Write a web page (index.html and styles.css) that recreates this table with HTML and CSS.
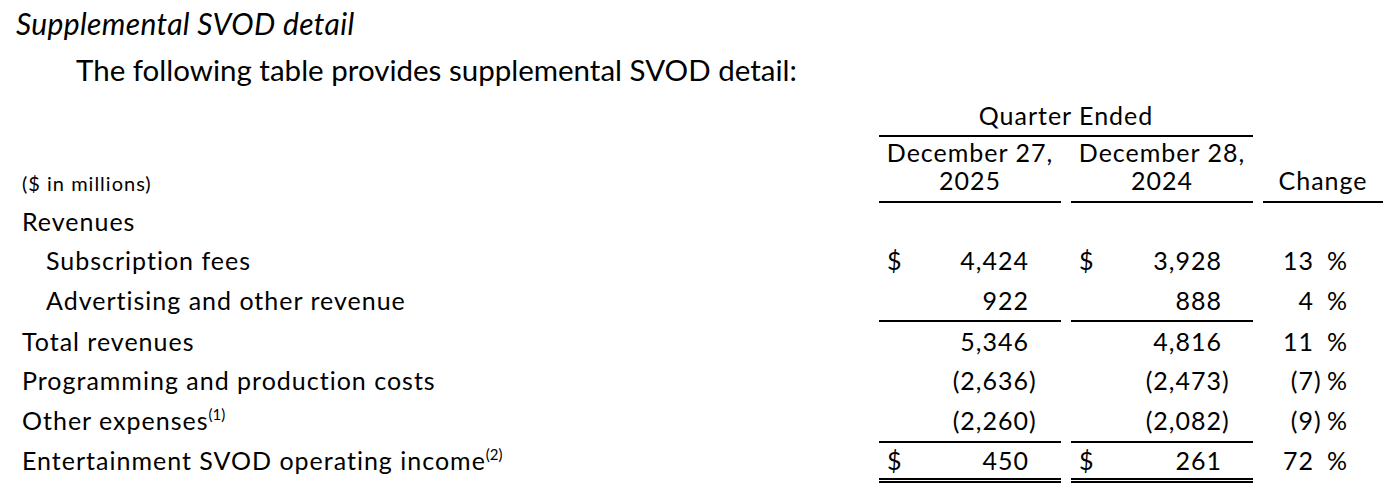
FILE: index.html
```html
<!DOCTYPE html>
<html lang="en">
<head>
<meta charset="utf-8">
<title>Supplemental SVOD detail</title>
<link rel="stylesheet" href="styles.css">
</head>
<body>
<main class="page">
  <h2 class="title">Supplemental SVOD detail</h2>
  <p class="intro">The following table provides supplemental SVOD detail:</p>
  <table class="fin">
    <colgroup>
      <col class="c-label">
      <col class="c-a">
      <col class="c-b">
      <col class="c-chg">
    </colgroup>
    <thead>
      <tr class="h1">
        <th></th>
        <th colspan="2" class="qe">Quarter Ended</th>
        <th></th>
      </tr>
      <tr class="h2">
        <th class="units">($ in millions)</th>
        <th class="date">December 27,<br>2025</th>
        <th class="date">December 28,<br>2024</th>
        <th class="date">Change</th>
      </tr>
    </thead>
    <tbody>
      <tr class="r-first">
        <td class="lbl">Revenues</td>
        <td></td><td></td><td></td>
      </tr>
      <tr>
        <td class="lbl ind">Subscription fees</td>
        <td><div class="amt a"><span class="cur">$</span><span class="val">4,424</span><span class="hang"></span></div></td>
        <td><div class="amt b"><span class="cur">$</span><span class="val">3,928</span><span class="hang"></span></div></td>
        <td><div class="pct"><span class="val">13</span><span class="hang"></span><span class="sign">%</span></div></td>
      </tr>
      <tr>
        <td class="lbl ind">Advertising and other revenue</td>
        <td><div class="amt a"><span class="val">922</span><span class="hang"></span></div></td>
        <td><div class="amt b"><span class="val">888</span><span class="hang"></span></div></td>
        <td><div class="pct"><span class="val">4</span><span class="hang"></span><span class="sign">%</span></div></td>
      </tr>
      <tr class="r-total">
        <td class="lbl">Total revenues</td>
        <td class="rule-top"><div class="amt a"><span class="val">5,346</span><span class="hang"></span></div></td>
        <td class="rule-top"><div class="amt b"><span class="val">4,816</span><span class="hang"></span></div></td>
        <td><div class="pct"><span class="val">11</span><span class="hang"></span><span class="sign">%</span></div></td>
      </tr>
      <tr>
        <td class="lbl">Programming and production costs</td>
        <td><div class="amt a"><span class="val">(2,636</span><span class="hang">)</span></div></td>
        <td><div class="amt b"><span class="val">(2,473</span><span class="hang">)</span></div></td>
        <td><div class="pct"><span class="val">(7</span><span class="hang">)</span><span class="sign">%</span></div></td>
      </tr>
      <tr class="r-other">
        <td class="lbl">Other expenses<sup>(1)</sup></td>
        <td><div class="amt a"><span class="val">(2,260</span><span class="hang">)</span></div></td>
        <td><div class="amt b"><span class="val">(2,082</span><span class="hang">)</span></div></td>
        <td><div class="pct"><span class="val">(9</span><span class="hang">)</span><span class="sign">%</span></div></td>
      </tr>
      <tr class="r-final">
        <td class="lbl">Entertainment SVOD operating income<sup>(2)</sup></td>
        <td class="rule-top rule-double"><div class="amt a"><span class="cur">$</span><span class="val">450</span><span class="hang"></span></div></td>
        <td class="rule-top rule-double"><div class="amt b"><span class="cur">$</span><span class="val">261</span><span class="hang"></span></div></td>
        <td><div class="pct"><span class="val">72</span><span class="hang"></span><span class="sign">%</span></div></td>
      </tr>
    </tbody>
  </table>
</main>
</body>
</html>
```

FILE: styles.css
```css
html, body {
  margin: 0;
  padding: 0;
  background: #fff;
}

body {
  font-family: Lato, "Liberation Sans", sans-serif;
  color: #000;
}

th, td {
  padding: 0;
  font-weight: 400;
}

.page {
  width: 1396px;
}

.title {
  margin: 5px 0 0 16px;
  font-size: 30px;
  line-height: 36px;
  letter-spacing: 0.35px;
  font-style: italic;
  font-weight: 400;
}

.intro {
  margin: 11px 0 0 76px;
  font-size: 29.5px;
  line-height: 36px;
}

.fin {
  margin: 13px 0 0 -10px;
  width: 1403px;
  table-layout: fixed;
  border-collapse: separate;
  border-spacing: 10px 0;
  font-size: 25px;
  letter-spacing: 1px;
}

.c-label { width: 869px; }
.c-a { width: 182px; }
.c-b { width: 182px; }
.c-chg { width: 120px; }

.h1 th {
  line-height: 28px;
  vertical-align: bottom;
}

.qe {
  text-align: center;
  padding-bottom: 6px;
  border-bottom: 2px solid #000;
}

.h2 th {
  vertical-align: bottom;
  line-height: 28px;
}

.date {
  text-align: center;
  padding: 1px 0 7px;
  border-bottom: 2px solid #000;
}

.units {
  text-align: left;
  padding: 0 0 6px 22px;
  font-size: 20px;
  line-height: 24px;
}

.fin td {
  vertical-align: baseline;
  line-height: 40px;
}

.fin .r-first td { line-height: 37px; }
.fin .r-total td { line-height: 38px; }
.fin .r-other td { line-height: 41px; }
.fin .r-final td { line-height: 35px; }

.lbl {
  padding-left: 22px;
  white-space: nowrap;
}

.lbl.ind { padding-left: 46px; }

.lbl sup {
  font-size: 0.6em;
  letter-spacing: 0;
  line-height: 0;
  vertical-align: 0.7em;
}

.rule-top { border-top: 2px solid #000; }
.rule-double { border-bottom: 5px double #000; }

.amt {
  display: flex;
  justify-content: flex-end;
}

.amt .cur {
  margin-right: auto;
}

.amt.a { padding: 0 24px 0 8px; }
.amt.b { padding: 0 23px 0 8px; }

.hang {
  width: 8px;
  text-align: left;
  flex: none;
}

.pct {
  display: flex;
  justify-content: flex-end;
  padding-right: 35px;
}

.pct .sign {
  margin-left: 5px;
}
```
